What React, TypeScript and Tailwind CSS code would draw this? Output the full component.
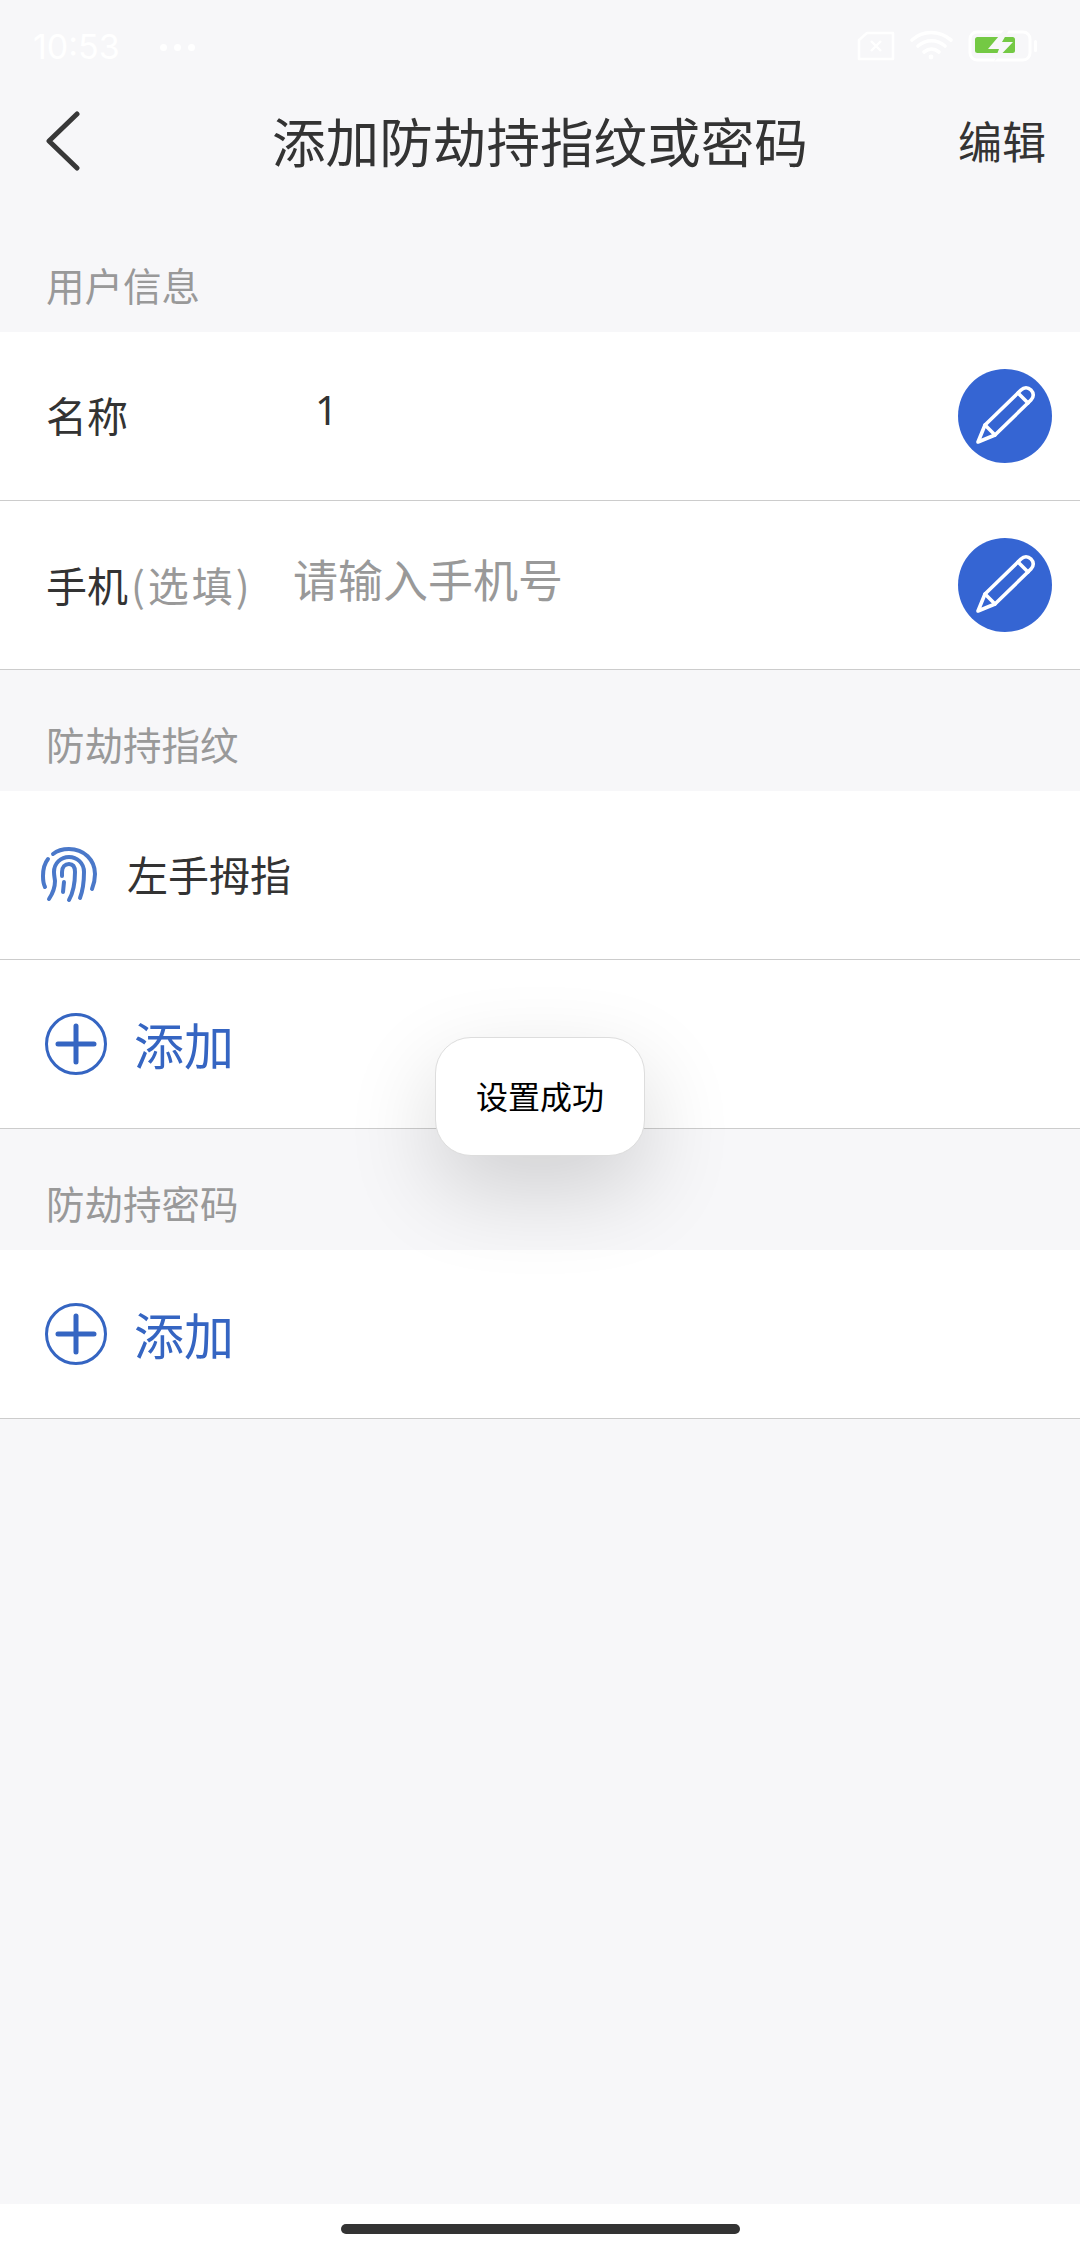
const FONT = "font-['Noto_Sans_CJK_SC','Noto_Sans',sans-serif]";

function Pencil() {
  return (
    <svg width="94" height="94" viewBox="0 0 94 94" fill="none" stroke="#fff" strokeWidth="3.6" strokeLinejoin="round" strokeLinecap="round">
      <path d="M20 73 L27 56 L63 21 C66 18 70 18 73 21 C76 24 76 28 73 31 L37 66 Z" />
      <path d="M27 56 L37 66" />
      <path d="M60 24 L70 34" />
    </svg>
  );
}

function EditButton() {
  return (
    <div className="w-[94px] h-[94px] rounded-full bg-[#3565d3] shrink-0">
      <Pencil />
    </div>
  );
}

function PlusCircle() {
  return (
    <svg width="62" height="62" viewBox="0 0 62 62" fill="none" stroke="#3565c2" strokeLinecap="round">
      <circle cx="31" cy="31" r="29.5" strokeWidth="3" />
      <path d="M13 31 H49 M31 13 V49" strokeWidth="5" />
    </svg>
  );
}

function FingerprintIcon() {
  return (
    <svg width="56" height="56" viewBox="0 0 56 56" fill="none" stroke="#4a78c9" strokeWidth="4" strokeLinecap="round">
      <path d="M12 7 C17 3 22 2 28 2 C43 2 54 13 54 27 C54 32 53 37 51 42" />
      <path d="M7 12 C3 17 2 23 2 29 C2 33 2.5 37 4 40" />
      <path d="M8 52 C12 46 14 40 14 34 C13.5 30 13 28 13 25 C13 16 20 10 28 10 C36 10 43 16 43 25 C43 34 42 43 39 51" />
      <path d="M28 53 C32 46 34 36 34 25 C34 20 32 17 28 17 C24 17 21 20 21 25 L21 29" />
      <path d="M23 35 L22 45" />
    </svg>
  );
}

function BackIcon() {
  return (
    <svg width="36" height="60" viewBox="0 0 36 60" fill="none" stroke="#383838" strokeWidth="5" strokeLinecap="round" strokeLinejoin="round">
      <path d="M32 3 L4 30 L32 57" />
    </svg>
  );
}

function StatusIcons() {
  return (
    <div className="flex items-center">
      <svg width="38" height="30" viewBox="0 0 38 30" fill="none" stroke="#fff" strokeWidth="2.6" strokeLinejoin="round">
        <path d="M10 2 H36 V28 H2 V9 Z" />
        <path d="M14 10 L24 20 M24 10 L14 20" strokeWidth="2.4" />
      </svg>
      <svg className="ml-[14px]" width="46" height="32" viewBox="0 0 46 32" fill="none" stroke="#fff" strokeWidth="3.6" strokeLinecap="round">
        <path d="M3 10 C14 0 30 0 42 10" />
        <path d="M9 16 C17 9 28 9 36 16" />
        <path d="M15 22 C20 18 25 18 30 22" />
        <circle cx="22" cy="27" r="2.4" fill="#fff" stroke="none" />
      </svg>
      <div className="ml-[13px] flex items-center">
        <svg width="70" height="32" viewBox="0 0 70 32" fill="none">
          <rect x="2" y="2" width="60" height="28" rx="7" stroke="#fff" strokeWidth="3" />
          <rect x="7" y="7" width="40" height="16" rx="2.5" fill="#74c944" />
          <path d="M36 0 L20 19 H31 L26 32 L45 12 H34 L41 0 Z" fill="#f7f7f9" />
          <rect x="66" y="10" width="3" height="12" rx="1.5" fill="#fff" />
        </svg>
      </div>
    </div>
  );
}

function SectionLabel({ text, className }: { text: string; className: string }) {
  return (
    <div className={`px-[46px] flex items-end text-[38.5px] leading-[56px] text-[#999999] ${className}`}>
      {text}
    </div>
  );
}

function Row({ children }: { children: React.ReactNode }) {
  return (
    <div className="relative h-[169px] bg-white border-b border-[#cccccc] flex items-center pl-[46px] pr-[28px]">
      {children}
    </div>
  );
}

function AddRow() {
  return (
    <Row>
      <div className="-ml-[1px]">
        <PlusCircle />
      </div>
      <span className="ml-[27px] -mt-[3px] text-[50px] leading-none text-[#3565c2]">添加</span>
    </Row>
  );
}

export default function App() {
  return (
    <div className={`relative w-[1080px] h-[2248px] overflow-hidden bg-white flex flex-col ${FONT}`}>
      <div className="flex-1 bg-[#f7f7f9] flex flex-col">
        <div className="h-[92px] pt-[30px] pl-[33px] pr-[42px] flex items-start justify-between">
          <div className="flex items-center h-[34px]">
            <span className="text-[34px] leading-none text-white font-['Inter',sans-serif]">10:53</span>
            <div className="ml-[40px] flex gap-[7px]">
              <div className="w-[7px] h-[7px] rounded-full bg-white" />
              <div className="w-[7px] h-[7px] rounded-full bg-white" />
              <div className="w-[7px] h-[7px] rounded-full bg-white" />
            </div>
          </div>
          <StatusIcons />
        </div>

        <div className="h-[100px] pl-[45px] pr-[34px] pb-[2px] flex items-center justify-between relative">
          <BackIcon />
          <span className="absolute left-0 right-0 -mt-[3px] text-center text-[53.6px] leading-none text-[#333333]">添加防劫持指纹或密码</span>
          <span className="-mt-[3px] text-[44px] leading-none text-[#333333]">编辑</span>
        </div>

        <SectionLabel text="用户信息" className="h-[140px] pb-[20px]" />

        <Row>
          <span className="w-[269px] -mt-[3px] text-[41px] leading-none text-[#333333]">名称</span>
          <span className="flex-1 -mt-[12px] text-[40px] leading-none text-[#333333] font-['Noto_Sans',sans-serif]">1</span>
          <EditButton />
        </Row>
        <Row>
          <div className="w-[247px] flex items-baseline -mt-[2px]">
            <span className="text-[41px] leading-none text-[#333333]">手机</span>
            <span className="ml-[3px] text-[41px] leading-none text-[#999999] tracking-[3px]">(选填)</span>
          </div>
          <span className="flex-1 -mt-[14px] text-[45px] leading-none text-[#999999]">请输入手机号</span>
          <EditButton />
        </Row>

        <SectionLabel text="防劫持指纹" className="h-[121px] pb-[20px]" />

        <Row>
          <div className="-ml-[5px] -mt-[1px]">
            <FingerprintIcon />
          </div>
          <span className="ml-[30px] -mt-[3px] text-[41px] leading-none text-[#333333]">左手拇指</span>
        </Row>
        <AddRow />

        <SectionLabel text="防劫持密码" className="h-[121px] pb-[20px]" />

        <AddRow />
      </div>

      <div className="h-[44px] bg-white flex justify-center items-end pb-[14px]">
        <div className="w-[399px] h-[10px] rounded-full bg-[#333333]" />
      </div>

      <div className="absolute left-[435px] top-[1037px] w-[210px] h-[119px] rounded-[36px] bg-white border border-[#dddddd] flex items-center justify-center text-[32px] leading-none text-black shadow-[0_34px_90px_rgba(0,0,0,0.16)]">
        <span className="-mt-[3px]">设置成功</span>
      </div>
    </div>
  );
}
